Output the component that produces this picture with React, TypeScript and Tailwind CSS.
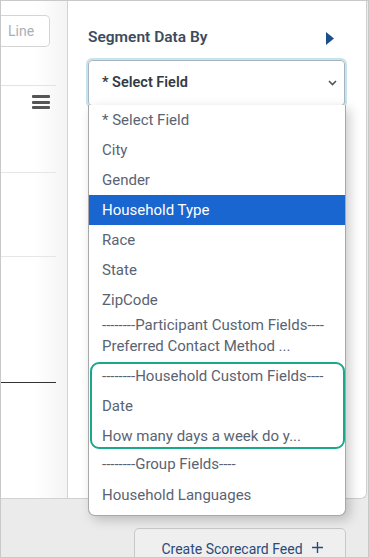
import React from "react";

const items: { label: string; h: number; pb?: number; active?: boolean }[] = [
  { label: "* Select Field", h: 30 },
  { label: "City", h: 30 },
  { label: "Gender", h: 30 },
  { label: "Household Type", h: 30, active: true },
  { label: "Race", h: 30 },
  { label: "State", h: 30 },
  { label: "ZipCode", h: 30 },
  { label: "--------Participant Custom Fields----", h: 20 },
  { label: "Preferred Contact Method ...", h: 26, pb: 4 },
  { label: "--------Household Custom Fields----", h: 30 },
  { label: "Date", h: 30 },
  { label: "How many days a week do y...", h: 31 },
  { label: "--------Group Fields----", h: 28, pb: 3 },
  { label: "Household Languages", h: 30 },
  { label: "Household Size", h: 30 },
];

export default function App() {
  return (
    <div
      className="relative w-[369px] h-[558px] overflow-hidden border border-[#c9c9c9] bg-[#ebebeb] flex flex-col"
      style={{ fontFamily: "Roboto, 'Liberation Sans', sans-serif" }}
    >
      <div className="flex h-[498px] shrink-0">
        {/* Left panel */}
        <div className="w-[67px] shrink-0 bg-gradient-to-r from-white via-white to-[#f4f4f4] border-r border-b border-[#d2d2d2] flex flex-col">
          <div className="mt-[14px] h-[32px] w-[49px] border border-l-0 border-[#d4d4d4] rounded-r-[5px] flex items-center pl-[7px] text-[14px] text-[#a9b0ba] bg-white">
            Line
          </div>
          <div className="mt-[38px] w-[55px] h-px bg-[#e3e3e3]" />
          <div className="mt-[9px] ml-[31px] w-[18px] flex flex-col gap-[2.5px]">
            <div className="h-[3px] bg-[#555] rounded-[1px]" />
            <div className="h-[3px] bg-[#555] rounded-[1px]" />
            <div className="h-[3px] bg-[#555] rounded-[1px]" />
          </div>
          <div className="mt-[63px] w-[55px] h-px bg-[#e6e6e6]" />
          <div className="mt-[83px] w-[55px] h-px bg-[#e6e6e6]" />
          <div className="mt-[125px] w-[55px] h-px bg-[#333]" />
        </div>
        {/* Right panel */}
        <div className="flex-1 mr-[1px] bg-white border-r border-b border-[#cfcfcf] rounded-br-[6px] flex flex-col pl-[18px] pr-[19px]">
          <div className="mt-[27px] h-[20px] flex items-center justify-between">
            <span className="text-[15.5px] font-semibold text-[#3d4b5e] pl-[2px]">Segment Data By</span>
            <svg width="8" height="13" viewBox="0 0 8 13" className="mr-[13px]">
              <polygon points="0,0 8,6.5 0,13" fill="#1b4f8a" />
            </svg>
          </div>
          <div className="mt-[10px] h-[50px] rounded-[6px] border-2 border-[#c4e4f2]">
            <div className="h-full rounded-[4px] border border-[#a9b4bd] flex items-center justify-between pl-[13px] pr-[7px]">
              <span className="text-[14.5px] font-semibold text-[#333a44]">* Select Field</span>
              <svg width="9" height="6" viewBox="0 0 9 6">
                <path d="M1 1 L4.5 4.5 L8 1" stroke="#555" strokeWidth="1.6" fill="none" />
              </svg>
            </div>
          </div>
        </div>
      </div>
      {/* Bottom area */}
      <div className="flex-1 flex justify-end pr-[22px]">
        <div className="mt-[29px] w-[212px] h-[40px] border border-[#c8c8c8] rounded-t-[5px] bg-[#efefef] flex items-start justify-center pt-[10px] pl-[4px] text-[14px] text-[#2b4a78] gap-[9px]">
          <span>Create Scorecard Feed</span>
          <svg width="11" height="11" viewBox="0 0 11 11" className="mt-[3px]">
            <path d="M5.5 0 V11 M0 5.5 H11" stroke="#2b4a78" strokeWidth="1.4" />
          </svg>
        </div>
      </div>

      {/* Dropdown list overlay */}
      <div className="absolute left-[87px] top-[104px] w-[258px] h-[411px] bg-white border border-[#a8a8a8] border-t-0 rounded-b-[7px] overflow-hidden shadow-[4px_4px_12px_rgba(0,0,0,0.2)]">
        {items.map((it, i) => (
          <div
            key={i}
            className={
              "flex items-center pl-[13px] text-[15px] whitespace-nowrap " +
              (it.active ? "bg-[#1a66d1] text-white" : "text-[#5a6372]")
            }
            style={{ height: it.h, paddingBottom: it.pb ?? 0 }}
          >
            {it.label}
          </div>
        ))}
      </div>
      {/* Highlight annotation */}
      <div className="absolute left-[89px] top-[361px] w-[255px] h-[87px] border-2 border-[#17a98a] rounded-[9px] pointer-events-none" />
    </div>
  );
}
